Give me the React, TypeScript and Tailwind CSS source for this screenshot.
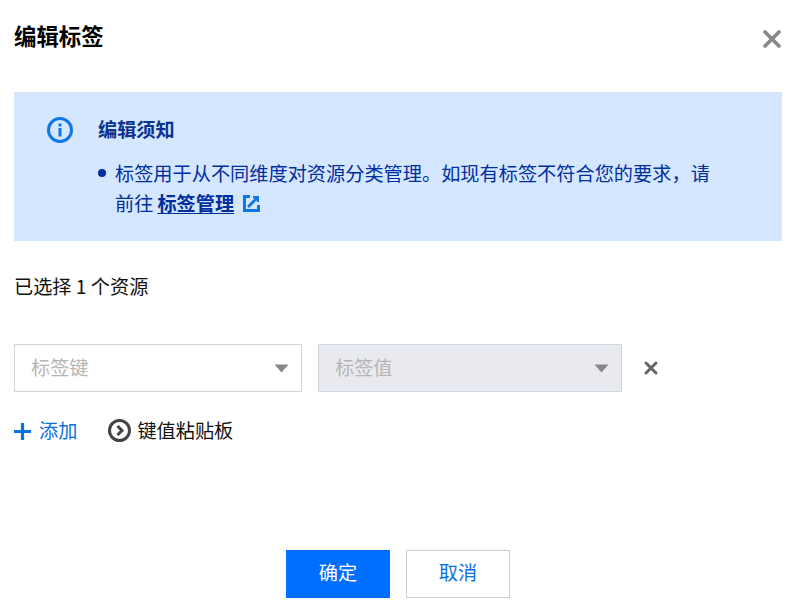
import { X } from 'lucide-react';

const fontStack = { fontFamily: '"Noto Sans CJK SC", "Liberation Sans", sans-serif' };

const Caret = ({ className }: { className: string }) => (
  <svg width="15" height="9" viewBox="0 0 15 9" className={className}>
    <path d="M0.5 0.5h14L7.5 8.5z" fill="currentColor" />
  </svg>
);

const InfoIcon = () => (
  <svg width="26" height="26" viewBox="0 0 26 26" fill="none">
    <circle cx="13" cy="13" r="11.5" stroke="#0f76e8" strokeWidth="3" />
    <rect x="11.5" y="6.5" width="3" height="3" fill="#0f76e8" />
    <rect x="11.5" y="11" width="3" height="8.5" fill="#0f76e8" />
  </svg>
);

const LinkIcon = () => (
  <svg width="17" height="17" viewBox="0 0 17 17" fill="none">
    <path d="M7 1.5H1.5v14h14V10" stroke="#0f76e8" strokeWidth="3" />
    <path d="M10 1h6v6h-2.4L13.6 5 8 10.6 6.4 9 12 3.4 10 3.4z" fill="#0f76e8" />
    <path d="M5 12l7-7" stroke="#0f76e8" strokeWidth="2.6" />
  </svg>
);

const PlusIcon = () => (
  <svg width="17" height="17" viewBox="0 0 17 17" fill="none">
    <path d="M8.5 0v17M0 8.5h17" stroke="#0a6fe6" strokeWidth="3.2" />
  </svg>
);

const CircleArrow = () => (
  <svg width="23" height="23" viewBox="0 0 23 23" fill="none">
    <circle cx="11.5" cy="11.5" r="10" stroke="#444444" strokeWidth="3" />
    <path d="M9.5 7l4.5 4.5L9.5 16" stroke="#444444" strokeWidth="3" />
  </svg>
);

export default function App() {
  return (
    <div className="w-[802px] h-[616px] bg-white overflow-hidden pl-[14px] pr-[20px]" style={fontStack}>
      <div className="flex justify-between h-[92px]">
        <h1 className="mt-[19px] text-[22.4px] leading-[32px] font-bold text-black">编辑标签</h1>
        <X size={28} strokeWidth={3.2} className="mt-[25px] -mr-[4px] text-[#888888]" />
      </div>

      <div className="h-[149px] bg-[#d5e7ff] flex pl-[33px] pt-[25px]">
        <InfoIcon />
        <div className="ml-[25px] text-[#002da0]">
          <p className="-mt-[1px] text-[19.2px] leading-[26px] font-bold text-[#0a3290]">编辑须知</p>
          <div className="flex mt-[15px] text-[19.2px] leading-[30px]">
            <span className="w-[8px] h-[8px] mt-[12px] rounded-full bg-[#002da0] shrink-0" />
            <div className="ml-[9px] w-[605px]">
              <p className="mt-[1px]">标签用于从不同维度对资源分类管理。如现有标签不符合您的要求{'\uFF0C'}请</p>
              <p className="flex items-center">
                前往
                <a className="ml-[4px] font-bold underline underline-offset-2">标签管理</a>
                <span className="ml-[9px] flex">
                  <LinkIcon />
                </span>
              </p>
            </div>
          </div>
        </div>
      </div>

      <p className="-mt-[1px] pt-[32px] text-[19.2px] leading-[28px] text-[#111111]">已选择 1 个资源</p>

      <div className="flex items-center mt-[44px]">
        <div className="w-[288px] h-[48px] border border-[#cfd5de] flex items-center justify-between pl-[16px] pr-[12px] text-[19.2px] text-[#b5b5b5]">
          <span className="-mt-[2px]">标签键</span>
          <Caret className="text-[#888888]" />
        </div>
        <div className="w-[304px] h-[48px] ml-[16px] border border-[#cfd5de] bg-[#e8eaef] flex items-center justify-between pl-[16px] pr-[12px] text-[19.2px] text-[#b5b5b5]">
          <span className="-mt-[2px]">标签值</span>
          <Caret className="text-[#888888]" />
        </div>
        <X size={20} strokeWidth={3.6} className="ml-[19px] text-[#666666]" />
      </div>

      <div className="flex items-center mt-[24px] h-[30px] text-[19.2px]">
        <PlusIcon />
        <span className="ml-[8px] -mt-[1px] text-[#0a6fe6]">添加</span>
        <span className="ml-[31px] -mt-[2px] flex">
          <CircleArrow />
        </span>
        <span className="ml-[6px] -mt-[1px] text-[#111111]">键值粘贴板</span>
      </div>

      <div className="flex justify-center gap-[16px] mt-[104px]">
        <button className="w-[104px] h-[48px] pb-[3px] bg-[#006eff] text-white text-[19.2px]">确定</button>
        <button className="w-[104px] h-[48px] pb-[3px] bg-white border border-[#cfcfcf] text-[#0a6fe6] text-[19.2px]">取消</button>
      </div>
    </div>
  );
}
